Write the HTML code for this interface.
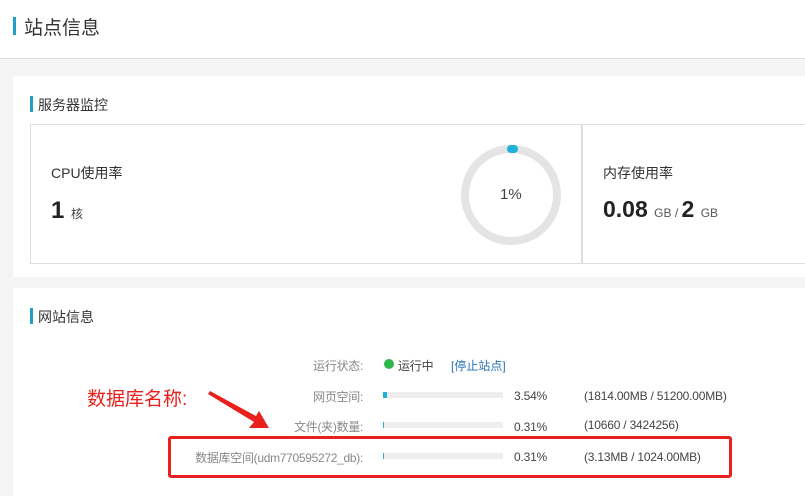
<!DOCTYPE html>
<html><head><meta charset="utf-8"><style>
*{margin:0;padding:0;box-sizing:border-box}
body{width:805px;height:496px;overflow:hidden;background:#f5f5f5;font-family:"Liberation Sans","Microsoft YaHei","Noto Sans CJK SC",sans-serif;color:#333;position:relative}
.abs{position:absolute}
.top{left:0;top:0;width:805px;height:59px;background:#fff;border-bottom:1px solid #ddd}
.card{background:#fff;left:13px;width:792px}
.bar{width:3px;background:#20a0c8}
.lbl{font-size:12px;color:#888;text-align:right;width:200px;letter-spacing:-0.3px}
.pb{width:120px;height:6px;background:#eee}
.pb i{display:block;height:6px;background:#20b0d8}
.t12{font-size:12px;color:#444;letter-spacing:-0.2px}
</style></head><body>
<div class="abs top"></div>
<div class="abs bar" style="left:13px;top:17px;height:18px"></div>
<div class="abs" style="left:24px;top:13px;font-size:19px;color:#333">站点信息</div>

<div class="abs card" style="top:76px;height:201px"></div>
<div class="abs bar" style="left:30px;top:96px;height:16px"></div>
<div class="abs" style="left:38px;top:95px;font-size:14px">服务器监控</div>
<div class="abs" style="left:30px;top:124px;width:790px;height:140px;border:1px solid #ddd"></div>
<div class="abs" style="left:581px;top:124px;width:2px;height:140px;background:#ddd"></div>
<div class="abs" style="left:51px;top:163px;font-size:14px">CPU使用率</div>
<div class="abs" style="left:51px;top:197px;font-size:24px;font-weight:bold;color:#222">1 <span style="font-size:12px;font-weight:normal;color:#444">核</span></div>
<svg class="abs" style="left:460px;top:144px" width="102" height="102"><circle cx="51" cy="51" r="46" fill="none" stroke="#e4e4e4" stroke-width="8"/><rect x="47" y="1" width="11" height="8" rx="4" fill="#1fb3dc"/></svg>
<div class="abs" style="left:500px;top:186px;font-size:15px;color:#444">1%</div>
<div class="abs" style="left:603px;top:163px;font-size:14px">内存使用率</div>
<div class="abs" style="left:603px;top:196px;font-size:23px;font-weight:bold;color:#222">0.08 <span style="font-size:12px;font-weight:normal;color:#555">GB / </span>2 <span style="font-size:12px;font-weight:normal;color:#555">GB</span></div>

<div class="abs card" style="top:288px;height:208px"></div>
<div class="abs bar" style="left:30px;top:308px;height:16px"></div>
<div class="abs" style="left:38px;top:307px;font-size:14px">网站信息</div>

<div class="abs lbl" style="left:163px;top:357px">运行状态:</div>
<div class="abs" style="left:384px;top:359px;width:10px;height:10px;border-radius:50%;background:#2db84d"></div>
<div class="abs t12" style="left:398px;top:357px">运行中</div>
<div class="abs" style="left:451px;top:357px;font-size:12px;color:#2a6fb8">[停止站点]</div>

<div class="abs lbl" style="left:163px;top:388px">网页空间:</div>
<div class="abs pb" style="left:383px;top:392px"><i style="width:4px"></i></div>
<div class="abs t12" style="left:514px;top:389px">3.54%</div>
<div class="abs t12" style="left:584px;top:389px">(1814.00MB / 51200.00MB)</div>

<div class="abs lbl" style="left:163px;top:418px">文件(夹)数量:</div>
<div class="abs pb" style="left:383px;top:422px"><i style="width:1px"></i></div>
<div class="abs t12" style="left:514px;top:420px">0.31%</div>
<div class="abs t12" style="left:584px;top:418px">(10660 / 3424256)</div>

<div class="abs lbl" style="left:163px;top:449px;width:200px">数据库空间(udm770595272_db):</div>
<div class="abs pb" style="left:383px;top:453px"><i style="width:1px"></i></div>
<div class="abs t12" style="left:514px;top:450px">0.31%</div>
<div class="abs t12" style="left:584px;top:450px">(3.13MB / 1024.00MB)</div>

<div class="abs" style="left:168px;top:436px;width:564px;height:42px;border:3px solid #e8211c;border-radius:3px"></div>
<div class="abs" style="left:87px;top:384px;font-size:19px;color:#e8211c">数据库名称:</div>
<svg class="abs" style="left:200px;top:385px" width="80" height="50"><polygon points="8,9 10,6 56,31 59,26 69,43 49,43 54,37" fill="#e8211c"/></svg>
</body></html>
